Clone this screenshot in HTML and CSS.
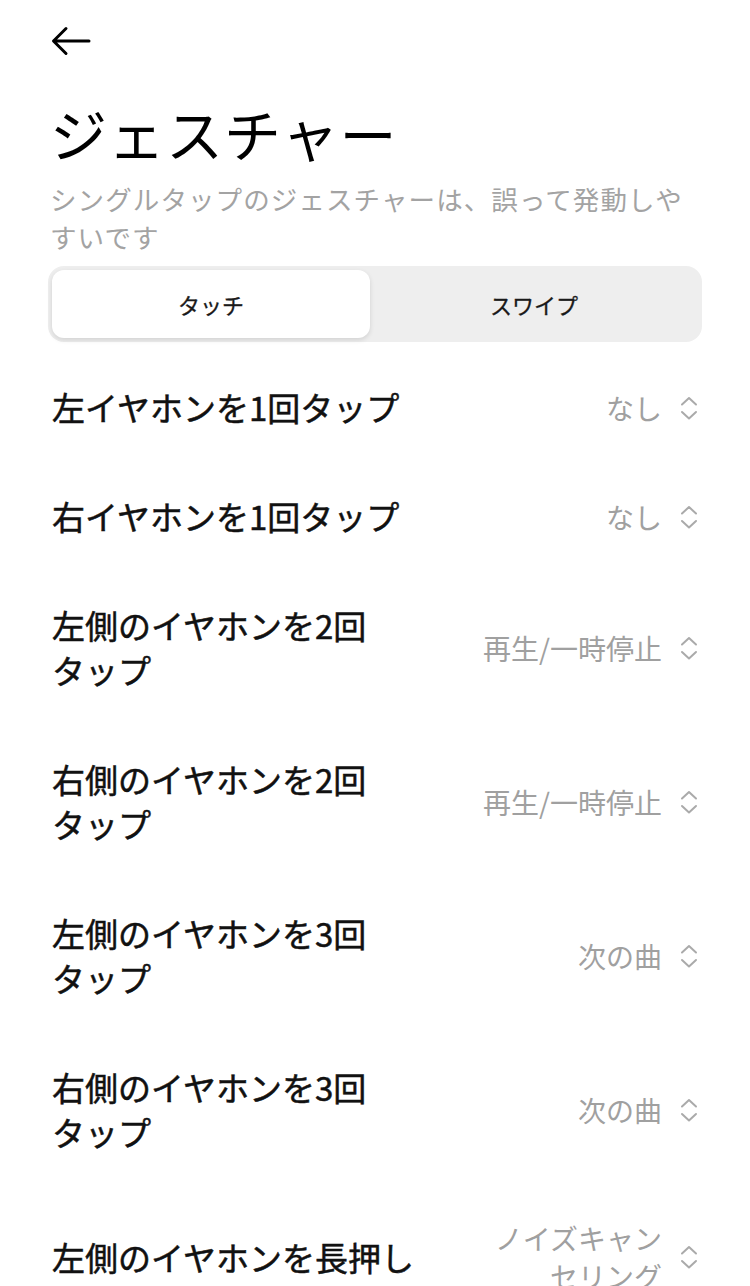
FILE: index.html
```html
<!DOCTYPE html>
<html lang="ja">
<head>
<meta charset="utf-8">
<link rel="stylesheet" href="styles.css">
</head>
<body>
<div class="page">
  <div class="topbar">
    <svg class="back" width="40" height="30" viewBox="0 0 40 30"><path d="M38 15H3M15 2.5L2.5 15 15 27.5" fill="none" stroke="#000" stroke-width="3" stroke-linecap="round" stroke-linejoin="round"/></svg>
  </div>
  <h1 class="title">ジェスチャー</h1>
  <p class="subtitle">シングルタップのジェスチャーは、誤って発動しやすいです</p>
  <div class="segment">
    <div class="seg-item active">タッチ</div>
    <div class="seg-item">スワイプ</div>
  </div>
  <div class="list">
    <div class="row">
      <div class="label">左イヤホンを1回タップ</div>
      <div class="value"><span class="vtext">なし</span><svg class="updown" width="18" height="26" viewBox="0 0 18 26"><path d="M2 9.5L9 3l7 6.5M2 17l7 6.5 7-6.5" fill="none" stroke="#aaaaaa" stroke-width="2" stroke-linecap="round" stroke-linejoin="round"/></svg></div>
    </div>
    <div class="row">
      <div class="label">右イヤホンを1回タップ</div>
      <div class="value"><span class="vtext">なし</span><svg class="updown" width="18" height="26" viewBox="0 0 18 26"><path d="M2 9.5L9 3l7 6.5M2 17l7 6.5 7-6.5" fill="none" stroke="#aaaaaa" stroke-width="2" stroke-linecap="round" stroke-linejoin="round"/></svg></div>
    </div>
    <div class="row">
      <div class="label">左側のイヤホンを2回タップ</div>
      <div class="value"><span class="vtext">再生/一時停止</span><svg class="updown" width="18" height="26" viewBox="0 0 18 26"><path d="M2 9.5L9 3l7 6.5M2 17l7 6.5 7-6.5" fill="none" stroke="#aaaaaa" stroke-width="2" stroke-linecap="round" stroke-linejoin="round"/></svg></div>
    </div>
    <div class="row">
      <div class="label">右側のイヤホンを2回タップ</div>
      <div class="value"><span class="vtext">再生/一時停止</span><svg class="updown" width="18" height="26" viewBox="0 0 18 26"><path d="M2 9.5L9 3l7 6.5M2 17l7 6.5 7-6.5" fill="none" stroke="#aaaaaa" stroke-width="2" stroke-linecap="round" stroke-linejoin="round"/></svg></div>
    </div>
    <div class="row">
      <div class="label">左側のイヤホンを3回タップ</div>
      <div class="value"><span class="vtext">次の曲</span><svg class="updown" width="18" height="26" viewBox="0 0 18 26"><path d="M2 9.5L9 3l7 6.5M2 17l7 6.5 7-6.5" fill="none" stroke="#aaaaaa" stroke-width="2" stroke-linecap="round" stroke-linejoin="round"/></svg></div>
    </div>
    <div class="row">
      <div class="label">右側のイヤホンを3回タップ</div>
      <div class="value"><span class="vtext">次の曲</span><svg class="updown" width="18" height="26" viewBox="0 0 18 26"><path d="M2 9.5L9 3l7 6.5M2 17l7 6.5 7-6.5" fill="none" stroke="#aaaaaa" stroke-width="2" stroke-linecap="round" stroke-linejoin="round"/></svg></div>
    </div>
    <div class="row">
      <div class="label">左側のイヤホンを長押し</div>
      <div class="value"><span class="vtext narrow">ノイズキャンセリング</span><svg class="updown" width="18" height="26" viewBox="0 0 18 26"><path d="M2 9.5L9 3l7 6.5M2 17l7 6.5 7-6.5" fill="none" stroke="#aaaaaa" stroke-width="2" stroke-linecap="round" stroke-linejoin="round"/></svg></div>
    </div>
  </div>
</div>
</body>
</html>
```

FILE: styles.css
```css
html, body {
  margin: 0;
  padding: 0;
  background: #ffffff;
}
body {
  font-family: "Noto Sans CJK JP", "Noto Sans", sans-serif;
  color: #111;
  width: 750px;
  height: 1286px;
  overflow: hidden;
}
.page {
  padding: 0 48px 0 48px;
}
.topbar {
  height: 82px;
  display: flex;
  align-items: center;
}
.back {
  display: block;
  margin-left: 3px;
}
.title {
  margin: 12px 0 0 2px;
  font-size: 57px;
  font-weight: 400;
  line-height: 76px;
  color: #000;
  letter-spacing: 1px;
}
.subtitle {
  margin: 10px 0 0 2px;
  font-size: 26.5px;
  line-height: 38px;
  color: #a3a3a3;
  font-weight: 400;
  letter-spacing: 1.1px;
}
.segment {
  margin-top: 10px;
  height: 76px;
  background: #eeeeee;
  border-radius: 16px;
  padding: 4px;
  box-sizing: border-box;
  display: flex;
}
.seg-item {
  flex: 1;
  display: flex;
  align-items: center;
  justify-content: center;
  font-size: 22px;
  font-weight: 400;
  color: #1a1a1a;
  border-radius: 12px;
  -webkit-text-stroke: 0.3px #1a1a1a;
}
.seg-item.active {
  background: #fff;
  box-shadow: 0 2px 5px rgba(0, 0, 0, 0.12);
  flex: 0 0 318px;
}
.list {
  margin-top: 11px;
}
.row {
  display: flex;
  align-items: center;
  justify-content: space-between;
  padding: 32px 4px 32px 4px;
}
.label {
  font-size: 33px;
  font-weight: 400;
  line-height: 45px;
  max-width: 370px;
  line-break: strict;
  color: #111;
  -webkit-text-stroke: 0.5px #111;
}
.value {
  display: flex;
  align-items: center;
  gap: 18px;
}
.vtext {
  font-size: 28px;
  color: #a0a0a0;
  line-height: 38px;
  text-align: right;
}
.vtext.narrow {
  max-width: 172px;
}
.updown {
  display: block;
}
```
